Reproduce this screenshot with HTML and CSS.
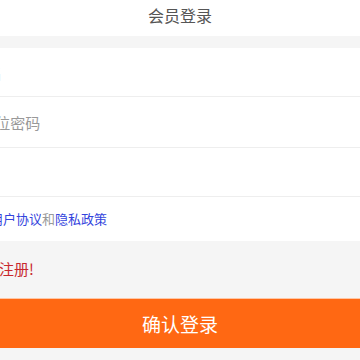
FILE: index.html
```html
<!DOCTYPE html>
<html lang="zh-CN">
<head>
    <meta charset="UTF-8">
    <meta name="viewport" content="width=device-width, initial-scale=1.0">
    <title>会员登录</title>
    <link rel="stylesheet" href="styles.css">
</head>
<body>
    <header class="top-bar">
        <h1>会员登录</h1>
    </header>

    <form class="login-form">
        <div class="field field-user">
            <input type="text" name="username" placeholder="请输入用户名">
        </div>
        <div class="field field-pass">
            <input type="password" name="password" placeholder="请输入6-16位密码">
        </div>
        <div class="field field-code">
            <input type="text" name="code">
        </div>
        <p class="agree">我已阅读并同意<a href="#">用户协议</a>和<a href="#">隐私政策</a></p>
    </form>

    <div class="footer-area">
        <p class="register">还没有账号？立即注册!</p>
        <button type="button" class="submit-btn">确认登录</button>
    </div>
</body>
</html>
```

FILE: styles.css
```css
html, body {
    margin: 0;
    padding: 0;
    overflow: hidden;
}

body {
    font-family: "Noto Sans CJK SC", "Noto Sans", sans-serif;
    background-color: #f5f5f5;
    width: 360px;
    height: 360px;
}

.top-bar {
    height: 36px;
    background: #fff;
    margin-bottom: 12px;
}

.top-bar h1 {
    margin: 0;
    font-size: 16px;
    font-weight: normal;
    line-height: 30px;
    color: #555;
    text-align: center;
}

.login-form {
    background: #fff;
    margin: 0;
}

.field {
    height: 48px;
    border-bottom: 1px solid #eee;
    display: flex;
    align-items: center;
}

.field-pass {
    height: 50px;
}

.field input {
    width: 100%;
    border: none;
    outline: none;
    padding: 0;
    font-family: inherit;
    font-size: 15px;
    color: #333;
    background: transparent;
}

.field input::placeholder {
    color: #999;
}

.field-user input {
    text-indent: -88px;
}

.field-pass input {
    text-indent: -80px;
}

.agree {
    margin: 0;
    height: 44px;
    line-height: 44px;
    font-size: 13px;
    color: #999;
    text-indent: -101px;
    white-space: nowrap;
}

.agree a {
    color: #3344dd;
    text-decoration: none;
}

.footer-area {
    padding-top: 13px;
}

.register {
    margin: 0 0 14px;
    height: 30px;
    line-height: 30px;
    font-size: 15px;
    color: #c8282e;
    text-indent: -121px;
    white-space: nowrap;
}

.submit-btn {
    display: block;
    width: 100%;
    height: 50px;
    border: none;
    border-top: 1px solid #ffc6a4;
    background-color: #ff6813;
    color: #fff;
    font-family: inherit;
    font-size: 19px;
    padding: 0;
    cursor: pointer;
}
```
